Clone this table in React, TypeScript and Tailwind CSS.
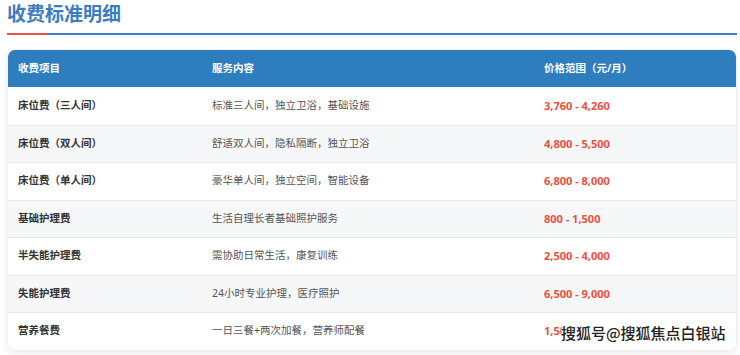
import React from "react";

const rows = [
  ["床位费（三人间）", "标准三人间，独立卫浴，基础设施", "3,760 - 4,260"],
  ["床位费（双人间）", "舒适双人间，隐私隔断，独立卫浴", "4,800 - 5,500"],
  ["床位费（单人间）", "豪华单人间，独立空间，智能设备", "6,800 - 8,000"],
  ["基础护理费", "生活自理长者基础照护服务", "800 - 1,500"],
  ["半失能护理费", "需协助日常生活，康复训练", "2,500 - 4,000"],
  ["失能护理费", "24小时专业护理，医疗照护", "6,500 - 9,000"],
  ["营养餐费", "一日三餐+两次加餐，营养师配餐", "1,500"],
];

export default function App() {
  return (
    <div
      className="w-[740px] h-[355px] bg-white overflow-hidden relative"
      style={{ fontFamily: '"Noto Sans", "Noto Sans CJK SC", sans-serif' }}
    >
      <div className="pl-[7px] pr-[3px]">
        <h2 className="text-[19px] leading-[28px] font-bold text-[#3a7dc0] pt-[0px]">收费标准明细</h2>
        <div className="mt-[5px] flex h-[2px]">
          <div className="w-[40px] bg-[#e8503f]" />
          <div className="flex-1 bg-[#3d82c4]" />
        </div>
        <div className="mt-[14px] rounded-[8px] overflow-hidden shadow-[0_2px_6px_rgba(0,0,0,0.08)] border border-[#eef1f4]">
          <div className="flex h-[37px] items-center bg-[#2e7ebf] text-white text-[10.5px] font-bold">
            <div className="w-[194px] pl-[10px]">收费项目</div>
            <div className="w-[332px] pl-[10px]">服务内容</div>
            <div className="flex-1 pl-[10px]">价格范围（元/月）</div>
          </div>
          {rows.map((r, i) => (
            <div
              key={i}
              className={`flex h-[37.5px] items-center text-[10.5px] ${i % 2 === 1 ? "bg-[#f6f7f9]" : "bg-white"} ${i > 0 ? "border-t border-[#e6eaef]" : ""}`}
            >
              <div className="w-[194px] pl-[10px] font-bold text-[#333333]">{r[0]}</div>
              <div className="w-[332px] pl-[10px] text-[#555555]">{r[1]}</div>
              <div className="flex-1 pl-[10px] font-bold text-[11px] text-[#e8503f]">{r[2]}</div>
            </div>
          ))}
        </div>
      </div>
      <div
        className="absolute left-[561px] top-[322px] text-[15px] leading-[22px] font-medium text-[#222] whitespace-nowrap"
        style={{ fontFamily: '"Noto Sans CJK SC", sans-serif', textShadow: "0 0 2px #fff, 0 0 2px #fff, 0 0 3px #fff" }}
      >
        搜狐号@搜狐焦点白银站
      </div>
    </div>
  );
}
